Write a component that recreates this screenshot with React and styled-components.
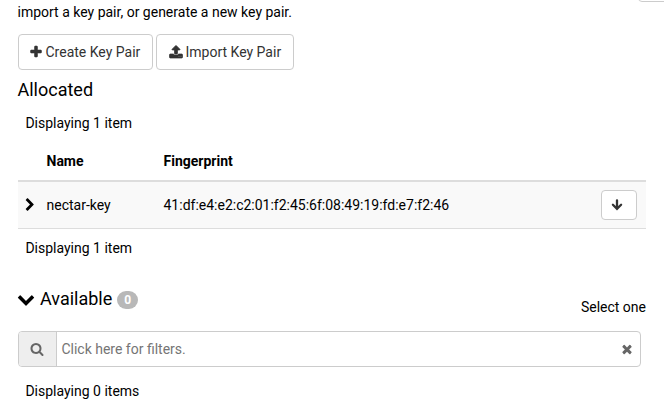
import React from "react";
import styled, { createGlobalStyle } from "styled-components";

const GlobalStyle = createGlobalStyle`
  *, *::before, *::after { box-sizing: border-box; }
  body {
    margin: 0;
    background: #fff;
    color: #000;
    font: 14px/20px Roboto, "Liberation Sans", sans-serif;
    overflow: hidden;
  }
`;

const icons = {
  plus: "M1600 736v192q0 40-28 68t-68 28h-416v416q0 40-28 68t-68 28h-192q-40 0-68-28t-28-68v-416h-416q-40 0-68-28t-28-68v-192q0-40 28-68t68-28h416v-416q0-40 28-68t68-28h192q40 0 68 28t28 68v416h416q40 0 68 28t28 68z",
  upload: "M1344 1472q0-26-19-45t-45-19-45 19-19 45 19 45 45 19 45-19 19-45zm256 0q0-26-19-45t-45-19-45 19-19 45 19 45 45 19 45-19 19-45zm128-224v320q0 40-28 68t-68 28h-1472q-40 0-68-28t-28-68v-320q0-40 28-68t68-28h427q21 56 70.5 92t110.5 36h256q61 0 110.5-36t70.5-92h427q40 0 68 28t28 68zm-325-648q-17 40-59 40h-256v448q0 26-19 45t-45 19h-256q-26 0-45-19t-19-45v-448h-256q-42 0-59-40-17-39 14-69l448-448q18-19 45-19t45 19l448 448q31 30 14 69z",
  search: "M1216 832q0-185-131.5-316.5t-316.5-131.5-316.5 131.5-131.5 316.5 131.5 316.5 316.5 131.5 316.5-131.5 131.5-316.5zm512 832q0 52-38 90t-90 38q-54 0-90-38l-343-342q-179 124-399 124-143 0-273.5-55.5t-225-150-150-225-55.5-273.5 55.5-273.5 150-225 225-150 273.5-55.5 273.5 55.5 225 150 150 225 55.5 273.5q0 220-124 399l343 343q37 37 37 90z",
  times: "M1490 1322q0 40-28 68l-136 136q-28 28-68 28t-68-28l-294-294-294 294q-28 28-68 28t-68-28l-136-136q-28-28-28-68t28-68l294-294-294-294q-28-28-28-68t28-68l136-136q28-28 68-28t68 28l294 294 294-294q28-28 68-28t68 28l136 136q28 28 28 68t-28 68l-294 294 294 294q28 28 28 68z",
  chevronDown: "M1683 808l-742 741q-19 19-45 19t-45-19l-742-741q-19-19-19-45.5t19-45.5l166-165q19-19 45-19t45 19l531 531 531-531q19-19 45-19t45 19l166 165q19 19 19 45.5t-19 45.5z",
  chevronRight: "M1363 877l-742 742q-19 19-45 19t-45-19l-166-166q-19-19-19-45t19-45l531-531-531-531q-19-19-19-45t19-45l166-166q19-19 45-19t45 19l742 742q19 19 19 45t-19 45z",
};

const Glyph = styled.svg`
  display: block;
  flex: none;
  width: ${(p) => p.$size}px;
  height: ${(p) => p.$size}px;
  fill: currentColor;
`;

const Icon = ({ name, size = 14, weight = 0 }) => (
  <Glyph $size={size} viewBox="0 0 1792 1792" aria-hidden="true">
    <path d={icons[name]} stroke={weight ? "currentColor" : "none"} strokeWidth={weight} />
  </Glyph>
);

const ArrowDown = () => (
  <Glyph $size={12} viewBox="0 0 12 12" aria-hidden="true">
    <path
      d="M6 1.3v8.2M1.9 5.7l4.1 4.1 4.1-4.1"
      fill="none"
      stroke="currentColor"
      strokeWidth="2.3"
      strokeLinecap="round"
      strokeLinejoin="miter"
    />
  </Glyph>
);

const Page = styled.main`
  position: relative;
  height: 402px;
  padding: 2px 18px 0;
  overflow: hidden;
`;

const HelpButton = styled.div`
  position: absolute;
  top: -30px;
  right: -10px;
  width: 36px;
  height: 32px;
  border: 1px solid #ccc;
  border-radius: 4px;
`;

const Intro = styled.p`
  margin: 0 0 12px -0.5px;
`;

const Actions = styled.div`
  display: flex;
  gap: 3px;
`;

const Button = styled.button`
  display: flex;
  align-items: center;
  gap: 2.5px;
  width: ${(p) => p.$width}px;
  height: ${(p) => p.$height || 36}px;
  padding: 0 0 0 ${(p) => p.$inset}px;
  border: 1px solid #ccc;
  border-radius: 4px;
  background: #fff;
  color: #333;
  font: inherit;
  white-space: nowrap;
`;

const Title = styled.h4`
  display: flex;
  align-items: center;
  margin: 0;
  font-size: 18px;
  font-weight: 400;
  line-height: 20px;
`;

const AllocatedTitle = styled(Title)`
  margin: 10px 0 0 -0.5px;
`;

const Count = styled.div`
  padding-left: 7.4px;
  margin-top: ${(p) => p.$top}px;
`;

const Table = styled.div`
  width: 628px;
  margin-top: 9px;
`;

const Row = styled.div`
  display: grid;
  grid-template-columns: 28.5px 117px 1fr 45px;
  align-items: center;
`;

const HeadRow = styled(Row)`
  height: 40px;
  padding-bottom: 1px;
  border-bottom: 2px solid #ddd;
  font-weight: 700;
`;

const KeyRow = styled(Row)`
  height: 47px;
  background: #f9f9f9;
  border-bottom: 1px solid #ddd;
`;

const Expander = styled.div`
  padding-left: 5.4px;
`;

const AvailableHeader = styled.div`
  display: flex;
  justify-content: space-between;
  width: 628px;
  height: 40px;
  margin-top: 31px;
`;

const AvailableTitle = styled(Title)`
  align-self: flex-start;
  margin-left: -0.6px;
`;

const TitleText = styled.span`
  margin-left: 4.6px;
`;

const Badge = styled.span`
  display: flex;
  align-items: center;
  justify-content: center;
  width: 21px;
  height: 18px;
  margin: 1px 0 -1px 5px;
  border-radius: 9px;
  background: #b8b8b8;
  color: #fff;
  font-size: 12px;
  font-weight: 700;
  line-height: 12px;
`;

const Hint = styled.span`
  margin-top: 8px;
`;

const Filter = styled.div`
  display: flex;
  width: 623px;
  height: 36px;
  margin-top: 2px;
  border: 1px solid #ccc;
  border-radius: 4px;
  overflow: hidden;
`;

const SearchBox = styled.div`
  display: flex;
  align-items: center;
  width: 38px;
  padding-left: 11px;
  border-right: 1px solid #ccc;
  background: #eee;
  color: #666;
`;

const Placeholder = styled.div`
  flex: 1;
  padding: 7px 4.4px;
  color: #757575;
`;

const Clear = styled.div`
  display: flex;
  align-items: center;
  padding-right: 6px;
  color: #666;
`;

export default function App() {
  return (
    <Page>
      <GlobalStyle />
      <HelpButton />
      <Intro>import a key pair, or generate a new key pair.</Intro>
      <Actions>
        <Button $width={135} $inset={10}><Icon name="plus" weight={70} />Create Key Pair</Button>
        <Button $width={138} $inset={12}><Icon name="upload" weight={90} />Import Key Pair</Button>
      </Actions>
      <AllocatedTitle>Allocated</AllocatedTitle>
      <Count $top={13}>Displaying 1 item</Count>
      <Table>
        <HeadRow>
          <span />
          <span>Name</span>
          <span>Fingerprint</span>
        </HeadRow>
        <KeyRow>
          <Expander><Icon name="chevronRight" /></Expander>
          <span>nectar-key</span>
          <span>41:df:e4:e2:c2:01:f2:45:6f:08:49:19:fd:e7:f2:46</span>
          <Button $width={36} $height={30} $inset={9}><ArrowDown /></Button>
        </KeyRow>
      </Table>
      <Count $top={9}>Displaying 1 item</Count>
      <AvailableHeader>
        <AvailableTitle>
          <Icon name="chevronDown" size={18} />
          <TitleText>Available</TitleText>
          <Badge>0</Badge>
        </AvailableTitle>
        <Hint>Select one</Hint>
      </AvailableHeader>
      <Filter>
        <SearchBox><Icon name="search" /></SearchBox>
        <Placeholder>Click here for filters.</Placeholder>
        <Clear><Icon name="times" /></Clear>
      </Filter>
      <Count $top={14}>Displaying 0 items</Count>
    </Page>
  );
}
